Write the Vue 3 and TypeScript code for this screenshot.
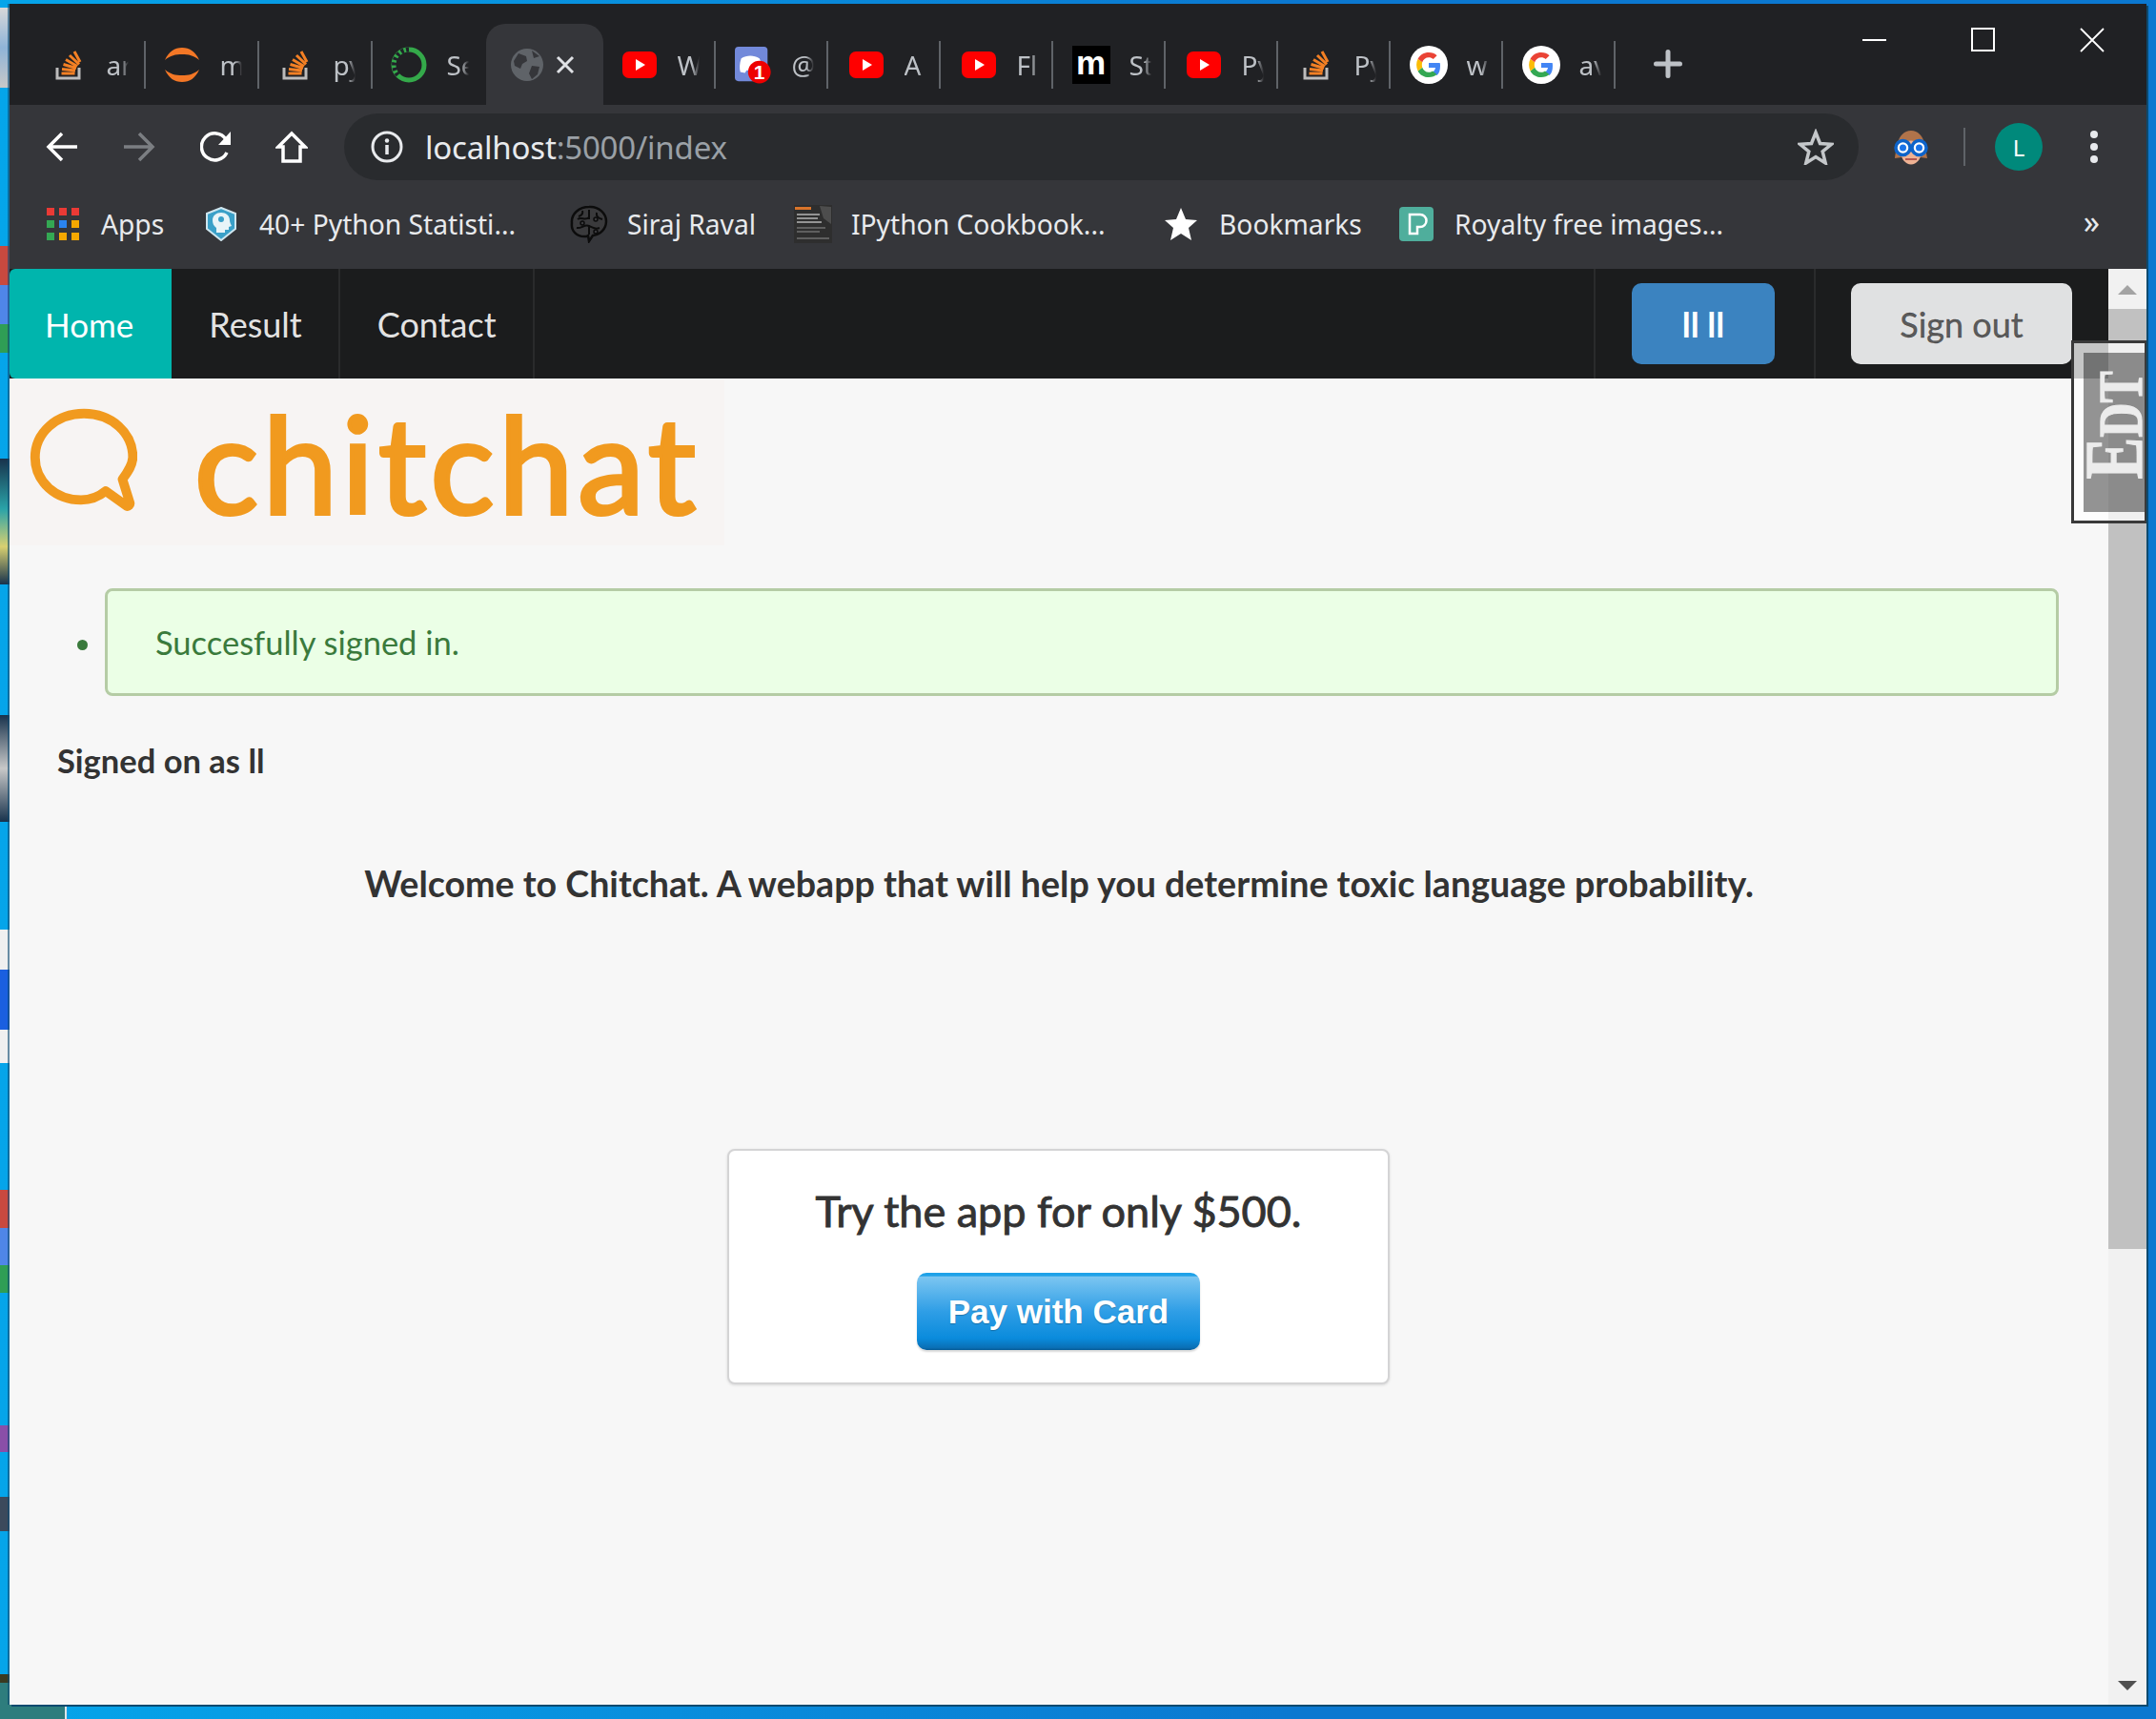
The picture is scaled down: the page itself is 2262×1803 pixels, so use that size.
<template>
  <div class="desktop">
    <!-- bits of desktop icons peeking out left of the window -->
    <div class="peek swirl"></div>
    <div class="peek chrome-a"></div>
    <div class="peek orb-a"></div>
    <div class="peek orb-b"></div>
    <div class="peek vs"></div>
    <div class="peek chrome-b"></div>
    <div class="peek purple"></div>
    <div class="peek dark-c"></div>
    <div class="wallpaper-thumb"></div>

    <div class="window">
      <div class="tabstrip">
        <div class="tabs">
          <div
            v-for="tab in tabs"
            :key="tab.id"
            class="tab"
            :class="{ active: tab.active, nosep: tab.nosep }"
          >
            <span class="favicon">
              <svg v-if="tab.icon === 'so'" width="28" height="32" viewBox="0 0 28 32">
                <path d="M2 19v11h23V19" fill="none" stroke="#bcbbbb" stroke-width="3" />
                <path d="M6.500 25h14M7 20.500l14 1.500M8.500 15.500l13.500 4M11 10.500l12 7M15 6l10 9.500M20 2l6 11" fill="none" stroke="#f48024" stroke-width="3" />
              </svg>
              <svg v-else-if="tab.icon === 'arc'" width="38" height="38" viewBox="0 0 38 38">
                <path d="M1 14C5 5 11 1 19 1s14 4 18 13C31 9 26 8 19 8S7 9 1 14z" fill="#f37726" />
                <path d="M1 24c4 9 10 13 18 13s14-4 18-13c-6 5-11 6-18 6S7 29 1 24z" fill="#f37726" />
              </svg>
              <svg v-else-if="tab.icon === 'ring'" width="38" height="40" viewBox="0 0 38 40">
                <circle cx="19" cy="20" r="16" fill="none" stroke="#34a94a" stroke-width="5" />
                <path d="M19 4A16 16 0 0 0 9 32" fill="none" stroke="#20212a" stroke-width="5" stroke-dasharray="3 2.500" />
              </svg>
              <svg v-else-if="tab.icon === 'globe'" width="34" height="36" viewBox="0 0 34 36">
                <circle cx="17" cy="18" r="17" fill="#5f6368" />
                <path d="M8 6l8 3 1 5-5 3-2 5-6-3-1-5zM22 19l8 1-2 8-6 5-3-6zM22 3l8 6-6 2z" fill="#35363a" />
              </svg>
              <svg v-else-if="tab.icon === 'yt'" width="36" height="28" viewBox="0 0 36 28">
                <rect width="36" height="28" rx="7" fill="#f00" />
                <path d="M14 8l10 6-10 6z" fill="#fff" />
              </svg>
              <svg v-else-if="tab.icon === 'discord'" width="42" height="42" viewBox="0 0 42 42">
                <rect y="1" width="36" height="38" rx="4" fill="#7289da" />
                <path d="M7 14c6-4 14-4 20 0 3 6 3 11 2 15l-6 1-2-3H13l-2 3-5-1c-1-4-1-9 1-15z" fill="#fff" />
                <circle cx="27" cy="29" r="12.500" fill="#e00" />
                <text x="27" y="37" class="badge-num">1</text>
              </svg>
              <span v-else-if="tab.icon === 'medium'" class="medium">m</span>
              <svg v-else-if="tab.icon === 'google'" width="40" height="40" viewBox="0 0 40 40">
                <circle cx="20" cy="20" r="20" fill="#fff" />
                <path d="M32 21c0-1-.1-2-.300-3H20v5h7c-.4 2-1.400 3.500-3 4.500l4.500 3.500C31 29 32 25.500 32 21z" fill="#4285f4" />
                <path d="M20 33c3.500 0 6.500-1.200 8.500-3l-4.500-3.500c-1 .8-2.400 1.300-4 1.300-3.200 0-5.800-2.100-6.800-5l-4.600 3.600C10.700 30.500 15 33 20 33z" fill="#34a853" />
                <path d="M13.200 22.800c-.5-1.700-.5-3.800 0-5.500l-4.600-3.600c-2 3.800-2 8.800 0 12.700z" fill="#fbbc05" />
                <path d="M20 12.300c1.800 0 3.400.6 4.700 1.800l3.900-3.900C26.400 8.200 23.500 7 20 7 15 7 10.700 9.500 8.600 13.700l4.600 3.600c1-2.900 3.600-5 6.800-5z" fill="#ea4335" />
              </svg>
            </span>
            <span v-if="tab.active" class="tab-close">
              <svg width="20" height="20" viewBox="0 0 20 20">
                <path d="M2 2l16 16M18 2L2 18" stroke="#dfe1e5" stroke-width="3" />
              </svg>
            </span>
            <span v-else class="tab-title">{{ tab.title }}</span>
          </div>
          <button class="new-tab" aria-label="New tab">
            <svg width="30" height="30" viewBox="0 0 30 30">
              <path d="M15 2.500v25M2.500 15h25" stroke="#bdc1c6" stroke-width="5" stroke-linecap="round" />
            </svg>
          </button>
        </div>
        <div class="window-controls">
          <svg width="26" height="26" viewBox="0 0 26 26"><path d="M0 13h25" stroke="#fff" stroke-width="2" /></svg>
          <svg width="26" height="26" viewBox="0 0 26 26"><rect x="1" y="1" width="23" height="23" fill="none" stroke="#fff" stroke-width="2" /></svg>
          <svg width="26" height="26" viewBox="0 0 26 26"><path d="M1 1l24 24M25 1L1 25" stroke="#fff" stroke-width="1.800" /></svg>
        </div>
      </div>

      <div class="toolbar">
        <svg class="tool" width="34" height="32" viewBox="0 0 34 32">
          <path d="M33 16H3M17 2L3 16l14 14" fill="none" stroke="#fff" stroke-width="3.500" />
        </svg>
        <svg class="tool" width="34" height="32" viewBox="0 0 34 32">
          <path d="M1 16h30M17 2l14 14-14 14" fill="none" stroke="#7b7e82" stroke-width="3.500" />
        </svg>
        <svg class="tool" width="34" height="34" viewBox="0 0 34 34">
          <path d="M28 23a14 14 0 1 1-1-14" fill="none" stroke="#fff" stroke-width="3.500" />
          <path d="M32 1v14H19z" fill="#fff" />
        </svg>
        <svg class="tool" width="34" height="34" viewBox="0 0 34 34">
          <path d="M17 3L3 17h5v15h18V17h5z" fill="none" stroke="#fff" stroke-width="3.500" />
        </svg>
        <div class="omnibox">
          <svg width="34" height="34" viewBox="0 0 34 34">
            <circle cx="17" cy="17" r="15" fill="none" stroke="#e8eaed" stroke-width="3" />
            <path d="M17 15v10" stroke="#e8eaed" stroke-width="3.500" />
            <circle cx="17" cy="10.500" r="2.200" fill="#e8eaed" />
          </svg>
          <span class="url"><span class="host">localhost</span>:5000/index</span>
          <svg class="star" width="38" height="38" viewBox="0 0 38 38">
            <path d="M19 4l4.500 11.500 12 .8-9.300 7.700 3 12L19 29.500 8.800 36l3-12-9.300-7.700 12-.8z" fill="none" stroke="#c4c7ca" stroke-width="3.500" />
          </svg>
        </div>
        <svg class="ext" width="36" height="38" viewBox="0 0 36 38">
          <path d="M1 31C3 20 3 3 18 2c15 1 15 18 17 29l-7-1H8z" fill="#b0734a" />
          <ellipse cx="18" cy="25" rx="10.500" ry="12.500" fill="#efb293" />
          <path d="M12 32h12" stroke="#b4574e" stroke-width="2" />
          <circle cx="9.500" cy="20" r="7.500" fill="#fff" stroke="#0d63c9" stroke-width="3.500" />
          <circle cx="26.500" cy="20" r="7.500" fill="#fff" stroke="#0d63c9" stroke-width="3.500" />
          <circle cx="9.500" cy="20" r="3.500" fill="#1a73e8" />
          <circle cx="26.500" cy="20" r="3.500" fill="#1a73e8" />
        </svg>
        <span class="tool-sep"></span>
        <span class="profile">L</span>
        <span class="kebab"><i></i><i></i><i></i></span>
      </div>

      <div class="bookmarks">
        <div v-for="b in bookmarks" :key="b.label" class="bookmark" :style="{ width: b.width + 'px' }">
          <span class="bm-icon">
            <svg v-if="b.icon === 'apps'" width="34" height="34" viewBox="0 0 34 34">
              <g v-for="(c, i) in appColors" :key="i">
                <rect :x="(i % 3) * 13" :y="Math.floor(i / 3) * 13" width="8" height="8" :fill="c" />
              </g>
            </svg>
            <svg v-else-if="b.icon === 'shield'" width="32" height="36" viewBox="0 0 32 36">
              <path d="M16 1l15 6v16L16 35 1 23V7z" fill="#3aa0c8" stroke="#cfe6ef" stroke-width="2" />
              <path d="M11 27v-5c-3-2-4-5-4-8 0-5 4-8 9-8s9 3 9 8c0 2 1 4 2 6l-3 1v3h-4v3z" fill="#e8f4f8" />
              <circle cx="16" cy="13" r="3" fill="#3aa0c8" />
            </svg>
            <svg v-else-if="b.icon === 'brain'" width="40" height="40" viewBox="0 0 40 40">
              <path d="M17 33C7 34 1 27 2 19 1 9 10 2 20 2c10-1 18 7 18 15 0 8-6 14-14 15l-4 6-1-6z" fill="#3a3a3c" stroke="#0c0c0c" stroke-width="2.500" />
              <path d="M8 15c4-3 8 2 12-2M7 24c5 1 8-4 13-2s6 4 11 2M20 5v10M28 8c-1 4 2 6 6 7M13 6c1 3-1 5-4 6M20 22v9" fill="none" stroke="#0c0c0c" stroke-width="2" />
              <circle cx="13" cy="19" r="2" fill="none" stroke="#0c0c0c" stroke-width="1.500" />
              <circle cx="27" cy="15" r="2" fill="none" stroke="#0c0c0c" stroke-width="1.500" />
              <circle cx="27" cy="28" r="2" fill="none" stroke="#0c0c0c" stroke-width="1.500" />
            </svg>
            <svg v-else-if="b.icon === 'book'" width="40" height="40" viewBox="0 0 40 40">
              <rect width="40" height="40" fill="#2e2e2e" />
              <rect x="1" y="2" width="17" height="3" fill="#d9742a" />
              <path d="M3 10h24M3 14h22M3 18h26" stroke="#b5b5b5" stroke-width="1.500" />
              <path d="M3 24h30M3 28h24M3 35h34" stroke="#707070" stroke-width="1.500" />
              <path d="M27 1l12 1v18l-8-6z" fill="#4d4d4d" />
            </svg>
            <svg v-else-if="b.icon === 'star'" width="34" height="34" viewBox="0 0 34 34">
              <path d="M17 0l5 12 12 1-9 8 3 13-11-7-11 7 3-13-9-8 12-1z" fill="#fff" />
            </svg>
            <svg v-else-if="b.icon === 'pexels'" width="36" height="36" viewBox="0 0 36 36">
              <rect width="36" height="36" rx="4" fill="#4fae9c" />
              <path d="M11 8h11a6 6 0 0 1 0 13h-3v7h-8z" fill="none" stroke="#fff" stroke-width="2.500" />
            </svg>
          </span>
          <span class="bm-label">{{ b.label }}</span>
        </div>
        <span class="bm-more">»</span>
      </div>

      <div class="viewport">
        <div class="page">
          <nav class="navbar">
            <a class="nav-item current">Home</a>
            <a class="nav-item">Result</a>
            <a class="nav-item">Contact</a>
            <div class="nav-right">
              <div class="nav-cell"><button class="btn-user">ll ll</button></div>
              <div class="nav-cell last"><button class="btn-signout">Sign out</button></div>
            </div>
          </nav>

          <div class="logo">
            <svg width="116" height="114" viewBox="0 0 112 110">
              <path d="M58 5.500C30 5.500 8.500 25 8.500 50 8.500 75 30 93 55 93 66 93 74 89 80 84L101 99C103 100 105 98 104.500 96L97 72C103 64 107 58 107.500 50 107.500 25 86 5.500 58 5.500Z" fill="none" stroke="#f19a1f" stroke-width="9.500" stroke-linejoin="round" />
            </svg>
            <span class="logo-text">chitchat</span>
          </div>

          <ul class="flashes">
            <li><div class="message">Succesfully signed in.</div></li>
          </ul>

          <p class="signed-on">Signed on as ll</p>
          <h3 class="welcome">Welcome to Chitchat. A webapp that will help you determine toxic language probability.</h3>

          <div class="pay-card">
            <h2>Try the app for only $500.</h2>
            <button class="pay-btn"><span>Pay with Card</span></button>
          </div>
        </div>

        <div class="scrollbar">
          <span class="arrow up"></span>
          <span class="thumb"></span>
          <span class="arrow down"></span>
        </div>

        <div class="edt"><span class="edt-inner"><span class="edt-text"><b>E</b>DT</span></span></div>
      </div>
    </div>
  </div>
</template>

<script setup lang="ts">
interface Tab {
  id: number
  icon: string
  title: string
  active?: boolean
  nosep?: boolean
}

interface Bookmark {
  icon: string
  label: string
  width: number
}

const tabs: Tab[] = [
  { id: 1, icon: 'so', title: 'ar' },
  { id: 2, icon: 'arc', title: 'm' },
  { id: 3, icon: 'so', title: 'py' },
  { id: 4, icon: 'ring', title: 'Se', nosep: true },
  { id: 5, icon: 'globe', title: '', active: true, nosep: true },
  { id: 6, icon: 'yt', title: 'W' },
  { id: 7, icon: 'discord', title: '@' },
  { id: 8, icon: 'yt', title: 'A' },
  { id: 9, icon: 'yt', title: 'Fl' },
  { id: 10, icon: 'medium', title: 'St' },
  { id: 11, icon: 'yt', title: 'Py' },
  { id: 12, icon: 'so', title: 'Py' },
  { id: 13, icon: 'google', title: 'w' },
  { id: 14, icon: 'google', title: 'av' },
]

const bookmarks: Bookmark[] = [
  { icon: 'apps', label: 'Apps', width: 166 },
  { icon: 'shield', label: '40+ Python Statisti...', width: 386 },
  { icon: 'brain', label: 'Siraj Raval', width: 235 },
  { icon: 'book', label: 'IPython Cookbook...', width: 386 },
  { icon: 'star', label: 'Bookmarks', width: 247 },
  { icon: 'pexels', label: 'Royalty free images...', width: 400 },
]

const appColors = [
  '#ea3a35', '#ea3a35', '#ea3a35',
  '#34a853', '#2a84f0', '#f5a800',
  '#34a853', '#f5a800', '#f5a800',
]
</script>

<style>
html,
body {
  margin: 0;
  padding: 0;
}
</style>

<style scoped>
.desktop {
  position: relative;
  width: 2262px;
  height: 1803px;
  box-sizing: border-box;
  padding: 4px 10px 15px;
  background: linear-gradient(90deg, #05a5ea, #0b78d0 60%);
  overflow: hidden;
  font-family: "Lato", "Open Sans", sans-serif;
}

.peek {
  position: absolute;
  left: 0;
  width: 10px;
}

.swirl {
  top: 8px;
  height: 84px;
  background: linear-gradient(#d8d8d8, #8fb4d8 50%, #c8c8c8);
}

.chrome-a {
  top: 258px;
  height: 112px;
  background: linear-gradient(#c9493f 37%, #4f86e8 37%, #4f86e8 73%, #2f9e55 73%);
}

.orb-a {
  top: 481px;
  height: 132px;
  background: linear-gradient(#18324c, #2aa3a8 40%, #d8d070 70%, #18324c);
}

.orb-b {
  top: 750px;
  height: 112px;
  background: linear-gradient(#18324c, #c8c8c8 50%, #18324c);
}

.vs {
  top: 975px;
  height: 140px;
  background: linear-gradient(#f0f0f0 30%, #1a5fe0 30%, #1a5fe0 75%, #f0f0f0 75%);
}

.chrome-b {
  top: 1248px;
  height: 108px;
  background: linear-gradient(#c9493f 37%, #4f86e8 37%, #4f86e8 73%, #2f9e55 73%);
}

.purple {
  top: 1495px;
  height: 28px;
  background: #8a4fa8;
}

.dark-c {
  top: 1570px;
  height: 36px;
  background: #3c4a5c;
}

.wallpaper-thumb {
  position: absolute;
  left: 0;
  top: 1756px;
  width: 68px;
  height: 47px;
  border-right: 2px solid #dfe5e8;
  background: linear-gradient(#3a3a20 20%, #2e7d7d 20%);
}

.window {
  position: relative;
  display: flex;
  flex-direction: column;
  width: 100%;
  height: 100%;
  box-shadow: 2px 2px 0 #0d4a6f, -2px 0 0 rgba(13, 74, 111, .6);
}

.tabstrip {
  display: flex;
  justify-content: space-between;
  height: 106px;
  flex: none;
  background: #202124;
}

.tabs {
  display: flex;
  align-items: flex-end;
  padding-left: 23.500px;
}

.tab {
  position: relative;
  display: flex;
  align-items: center;
  box-sizing: border-box;
  width: 118px;
  height: 85px;
  padding-left: 20px;
}

.tab:nth-child(-n+4) {
  width: 119px;
  padding-left: 18px;
}

.tab:nth-child(6) {
  padding-left: 18px;
}

.tab:not(.nosep)::after {
  content: "";
  position: absolute;
  right: 0;
  top: 18px;
  width: 2px;
  height: 50px;
  background: #5f6368;
}

.tab.active {
  width: 123px;
  padding-left: 23px;
  border-radius: 20px 20px 0 0;
  background: #35363a;
}

.favicon {
  display: flex;
  align-items: center;
  justify-content: center;
  width: 40px;
  height: 40px;
  flex: none;
}

.medium {
  display: block;
  width: 40px;
  height: 40px;
  flex: none;
  background: #000;
  color: #fff;
  font: bold 35px/36px "Liberation Sans", sans-serif;
  text-align: center;
}

.badge-num {
  fill: #fff;
  font: bold 22px "Liberation Sans", sans-serif;
  text-anchor: middle;
}

.tab-title {
  width: 23px;
  margin-left: 20px;
  overflow: hidden;
  white-space: nowrap;
  color: #bdc1c6;
  font: 28px/36px "Noto Sans", sans-serif;
  -webkit-mask-image: linear-gradient(90deg, #000 65%, transparent);
  mask-image: linear-gradient(90deg, #000 65%, transparent);
}

.tab-close {
  display: flex;
  margin-left: 10px;
}

.new-tab {
  position: relative;
  top: 10px;
  align-self: center;
  display: flex;
  margin: 0 0 0 40px;
  padding: 0;
  border: 0;
  background: none;
}

.window-controls {
  display: flex;
  align-items: flex-start;
  gap: 88px;
  padding: 25px 44px 0 0;
}

.toolbar {
  display: flex;
  align-items: center;
  flex: none;
  height: 88px;
  padding-left: 38px;
  background: #35363a;
}

.tool {
  flex: none;
  margin-right: 47px;
}

.tool:nth-child(3) {
  margin-right: 45px;
}

.tool:nth-child(4) {
  margin-right: 38px;
}

.omnibox {
  display: flex;
  align-items: center;
  flex: none;
  box-sizing: border-box;
  width: 1589px;
  height: 70px;
  padding: 0 26px 0 28px;
  border-radius: 35px;
  background: #292b2e;
}

.url {
  margin: 2px 0 0 23px;
  color: #9aa0a6;
  font: 33px/40px "Noto Sans", sans-serif;
  letter-spacing: -.2px;
  white-space: nowrap;
}

.host {
  color: #e8eaed;
}

.star {
  margin-left: auto;
}

.ext {
  flex: none;
  margin-left: 37px;
}

.tool-sep {
  width: 2px;
  height: 40px;
  margin-left: 37px;
  background: #5f6368;
}

.profile {
  display: flex;
  align-items: center;
  justify-content: center;
  width: 50px;
  height: 50px;
  margin-left: 31px;
  border-radius: 50%;
  background: #00897b;
  color: #fff;
  font: 24px "Noto Sans", sans-serif;
}

.kebab {
  display: flex;
  flex-direction: column;
  gap: 5px;
  margin-left: 50px;
}

.kebab i {
  display: block;
  width: 8px;
  height: 8px;
  border-radius: 50%;
  background: #e8eaed;
}

.bookmarks {
  display: flex;
  align-items: center;
  flex: none;
  box-sizing: border-box;
  height: 84px;
  padding: 0 0 11px 36px;
  background: #35363a;
}

.bookmark {
  display: flex;
  align-items: center;
  flex: none;
  gap: 20px;
}

.bm-icon {
  display: flex;
  flex: none;
  align-items: center;
  justify-content: center;
  width: 40px;
  height: 40px;
}

.bm-label {
  color: #e8eaed;
  font: 28.200px/40px "Noto Sans", sans-serif;
  white-space: nowrap;
}

.bm-more {
  margin: 0 49px 6px auto;
  color: #e8eaed;
  font: 34px/36px "Noto Sans", sans-serif;
}

.viewport {
  position: relative;
  display: flex;
  flex: 1;
  min-height: 0;
}

.page {
  flex: 1;
  min-width: 0;
  background: #f7f7f7;
  color: #333;
}

.navbar {
  display: flex;
  height: 115px;
  background: #1b1c1d;
}

.nav-item {
  display: flex;
  align-items: center;
  padding: 0 38px 0 39px;
  border-right: 2px solid #2a2b2c;
  color: rgba(255, 255, 255, .9);
  font-size: 36px;
}

.nav-item.current {
  padding: 0 40px 0 37px;
  border-right: 0;
  border-radius: 6px 0 0 6px;
  background: #00b5ad;
  color: #fff;
  font-size: 35px;
}

.nav-right {
  display: flex;
  margin-left: auto;
}

.nav-cell {
  display: flex;
  align-items: center;
  padding: 0 41px 0 38px;
  border-left: 2px solid #2a2b2c;
}

.nav-cell.last {
  padding: 0 38px 0 37px;
}

.btn-user,
.btn-signout {
  height: 85px;
  padding: 0;
  border: 0;
  border-radius: 10px;
  font-family: "Lato", sans-serif;
  font-size: 36px;
}

.btn-user {
  width: 150px;
  background: #3b83c0;
  color: #fff;
  font-weight: 700;
}

.btn-signout {
  width: 232px;
  background: #e0e1e2;
  color: rgba(0, 0, 0, .6);
  -webkit-text-stroke: .4px rgba(0, 0, 0, .6);
}

.logo {
  display: flex;
  align-items: center;
  box-sizing: border-box;
  width: 750px;
  height: 174px;
  margin-top: 1px;
  padding-left: 18px;
  background: #f7f4f3;
}

.logo-text {
  margin-left: 60px;
  color: #f19a1f;
  font: 400 140px/1 "Lato", sans-serif;
  letter-spacing: 4.800px;
  -webkit-text-stroke: 4px #f19a1f;
}

.flashes {
  margin: 45px 0 0;
  padding: 0 52px 0 100px;
  color: #3a7a3c;
  font-size: 34px;
}

.message {
  display: flex;
  align-items: center;
  box-sizing: border-box;
  height: 113px;
  padding-left: 50px;
  border: 3px solid #b5cca5;
  border-radius: 8px;
  background: #ebffe6;
  color: #3a7a3c;
  font-size: 34.500px;
}

.signed-on {
  margin: 48px 0 0 50px;
  font-size: 34.500px;
  line-height: 40px;
  font-weight: 700;
}

.welcome {
  margin: 86px 0 0;
  text-align: center;
  font-size: 37.600px;
  line-height: 46px;
  font-weight: 700;
}

.pay-card {
  display: flex;
  flex-direction: column;
  align-items: center;
  box-sizing: border-box;
  width: 695px;
  height: 247px;
  margin: 255px 0 0 753px;
  border: 2px solid #d4d4d5;
  border-radius: 8px;
  background: #fff;
  box-shadow: 0 1px 3px rgba(0, 0, 0, .12);
}

.pay-card h2 {
  margin: 35px 0 0;
  font-size: 45px;
  line-height: 56px;
  font-weight: 400;
  -webkit-text-stroke: .9px #333;
}

.pay-btn {
  width: 297px;
  height: 81px;
  margin-top: 37px;
  padding: 0;
  border: 0;
  border-radius: 10px;
  background: linear-gradient(#1ea1e8, #1ea1e8 4%, #7cc6f1 5%, #2f9ee6 50%, #0a8bdc 85%, #0a6fb5 97%, #055a96);
  box-shadow: 0 2px 2px rgba(0, 0, 0, .15);
  cursor: pointer;
}

.pay-btn span {
  color: #fff;
  font: bold 35px/1 "Liberation Sans", Arial, sans-serif;
  text-shadow: 0 1px 1px rgba(0, 0, 0, .25);
}

.scrollbar {
  position: relative;
  display: flex;
  flex-direction: column;
  align-items: center;
  flex: none;
  width: 40px;
  background: #f1f1f1;
}

.arrow {
  flex: none;
  width: 0;
  height: 0;
  border-left: 10px solid transparent;
  border-right: 10px solid transparent;
}

.arrow.up {
  margin-top: 17px;
  border-bottom: 10px solid #a3a3a3;
}

.arrow.down {
  margin-top: auto;
  margin-bottom: 15px;
  border-top: 10px solid #505050;
}

.thumb {
  flex: none;
  width: 100%;
  height: 986px;
  margin-top: 15px;
  background: #c1c1c1;
}

.edt {
  position: absolute;
  right: 0;
  top: 75px;
  box-sizing: border-box;
  width: 79px;
  height: 192px;
  padding: 10px 0 9px 10px;
  border: 3px solid #3a3a3a;
  border-right-width: 2px;
  background: rgba(255, 255, 255, .75);
}

.edt-inner {
  display: block;
  position: relative;
  height: 100%;
  overflow: hidden;
  background: rgba(0, 0, 0, .42);
}

.edt-text {
  position: absolute;
  left: 32px;
  top: 76px;
  transform: translate(-50%, -50%) rotate(-90deg) scaleY(1.300);
  color: #ececec;
  font: bold 50px/1 "Liberation Serif", serif;
  -webkit-text-stroke: 1px #ececec;
  white-space: nowrap;
}

.edt-text b {
  font-size: 66px;
}
</style>
